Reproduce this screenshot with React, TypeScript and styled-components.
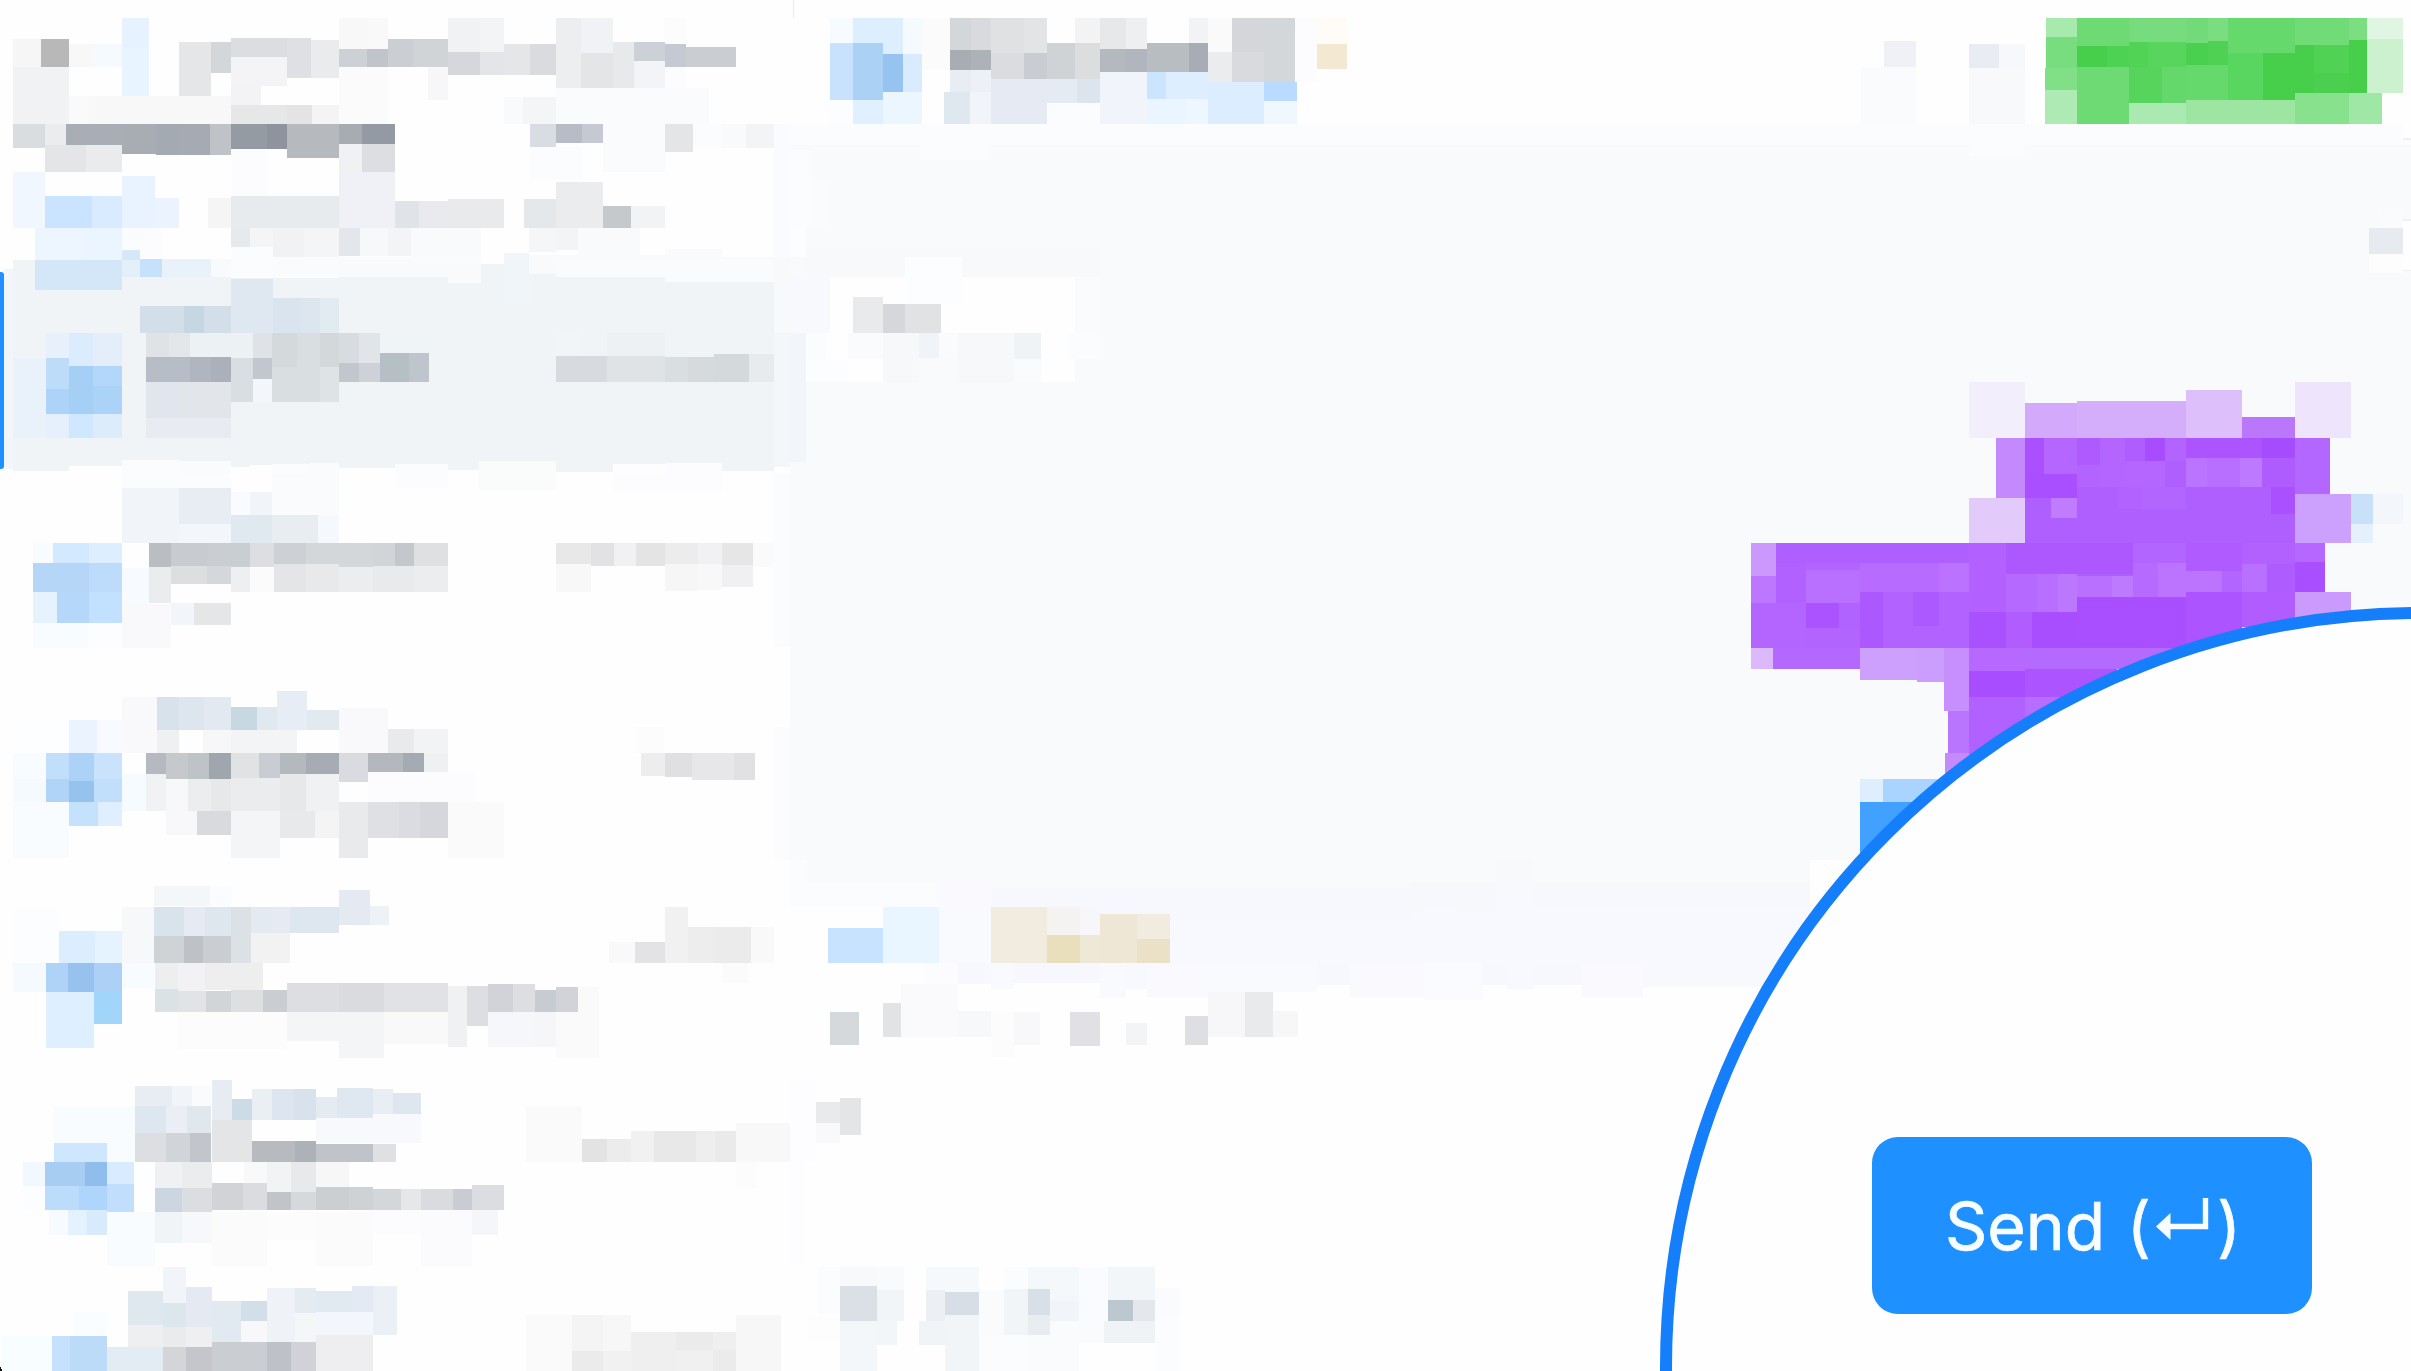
import React from 'react';
import styled, { createGlobalStyle } from 'styled-components';

type Cell = [number, number, number, number, string];

const GlobalStyle = createGlobalStyle`
  * { box-sizing: border-box; }
  html, body { margin: 0; padding: 0; background: #fefefe; }
  body { overflow: hidden; font-family: Inter, "Liberation Sans", sans-serif; }
`;

const Window = styled.main`
  position: relative;
  display: flex;
  width: 2411px;
  height: 1371px;
  overflow: hidden;
  background: #fefefe;
`;

const Sidebar = styled.aside`
  display: flex;
  flex-direction: column;
  flex: 0 0 790px;
`;

const Chat = styled.section`
  display: flex;
  flex-direction: column;
  flex: 1 1 auto;
  min-width: 0;
`;

const Row = styled.div<{ $height: number }>`
  display: flex;
  flex: 0 0 ${(p) => p.$height}px;
`;

const ActiveMark = styled.span`
  flex: 0 0 4px;
  height: 197px;
  margin-top: 12px;
  border-radius: 0 3px 3px 0;
  background: #1e90ff;
`;

const ChatHeader = styled.header`
  display: flex;
  justify-content: space-between;
  flex: 0 0 124px;
`;

const Messages = styled.div`
  display: flex;
  justify-content: space-between;
  align-items: flex-start;
  flex: 0 0 736px;
  background: linear-gradient(#fbfcfe 21px, #f9fafc 21px);
`;

const Thread = styled.div`
  display: flex;
  flex-direction: column;
`;

const Composer = styled.footer`
  display: flex;
  flex: 1 1 auto;
`;

const Art = styled.svg`
  display: block;
  flex: none;
`;

const Lens = styled.div`
  position: absolute;
  left: 1660px;
  top: 607px;
  width: 1520px;
  height: 1520px;
  padding: 517.5px 0 0 200px;
  border: 12px solid #157efb;
  border-radius: 50%;
  background: #fefefe;
`;

const SendButton = styled.button`
  display: flex;
  align-items: flex-start;
  width: 440px;
  height: 177px;
  padding: 49.5px 0 0 73px;
  border: 0;
  border-radius: 26px;
  background: #1e90ff;
  color: #f8fdff;
  font: 400 66px/80px Inter, "Liberation Sans", sans-serif;
  word-spacing: 3px;
  -webkit-text-stroke: 0.7px #f8fdff;
  white-space: pre;
`;

const ReturnIcon = styled.svg`
  flex: none;
  width: 54px;
  height: 44px;
  margin: 11.5px 7px 0 5px;
`;

interface MosaicProps {
  cells: Cell[];
  /** view box: x, y, width and height in drawing units */
  view: [number, number, number, number];
  width: number;
  height: number;
}

function Mosaic({ cells, view, width, height }: MosaicProps) {
  return (
    <Art width={width} height={height} viewBox={view.join(' ')} preserveAspectRatio="none" shapeRendering="crispEdges" aria-hidden>
      {cells.map(([x1, y1, x2, y2, fill], i) => (
        <rect key={i} x={x1} y={y1} width={x2 - x1} height={y2 - y1} fill={`#${fill}`} />
      ))}
    </Art>
  );
}

const filters: Cell[] = [
  [239,55,293,145,'e6f2ff'],[239,145,293,290,'e8f4ff'],
  [26,116,80,202,'f6f6f6'],[80,116,136,202,'b8b8b8'],[136,132,182,202,'f8f8f8'],[182,132,239,202,'f4faff'],
  [26,202,136,371,'f1f2f3'],
  [350,125,414,290,'e5e6e7'],[414,125,452,219,'d3d7da'],[452,114,563,170,'dcdde1'],[563,114,610,234,'dfe0e4'],[610,121,664,234,'eaebec'],
  [452,170,563,258,'f4f4f6'],[452,258,512,315,'f3f3f5'],
  [664,55,719,147,'f8f8f8'],[719,55,760,147,'f9f9f9'],
  [664,147,719,202,'cdd0d5'],[719,147,760,202,'c1c4ca'],[760,118,810,202,'cbced3'],[810,118,878,202,'d0d4d7'],
  [664,202,760,371,'fbfbfb'],[839,202,878,300,'f7f7fa'],
  [878,55,940,156,'f1f2f4'],[940,55,988,156,'f3f4f5'],
  [878,156,940,224,'d6d7dc'],[940,156,988,224,'e4e5e8'],[988,131,1038,224,'e5e6e8'],[1038,131,1090,224,'dadbdf'],
  [1090,55,1138,263,'edeeef'],[1138,55,1201,160,'f1f2f5'],[1138,160,1243,263,'e4e5e6'],[1201,125,1243,263,'e8e9eb'],
  [1243,125,1304,182,'ccd0d7'],[1243,182,1304,263,'f3f4f7'],[1304,132,1345,202,'c5c9d1'],[1345,141,1443,202,'cacdd2'],
  [1304,55,1345,132,'fcfcfc'],[1304,202,1345,263,'fcfcfe'],
  [136,289,174,371,'fafafa'],[174,289,452,371,'f8f8f8'],[452,315,563,371,'e6e7e7'],[563,315,612,371,'e4e4e5'],[612,315,664,371,'f4f4f4'],
  [988,290,1026,371,'f9fafc'],[1026,290,1090,371,'f4f5f7'],[1090,263,1390,371,'fafbfd'],
  [26,371,88,444,'d9dddf'],[88,371,130,435,'ebeced'],[130,371,239,435,'a9aeb6'],[239,371,305,461,'a8adb4'],[305,371,350,464,'a4aab2'],
  [350,371,411,464,'a6abb3'],[411,371,452,464,'bfc2c7'],[452,371,523,448,'949ba3'],[523,371,563,448,'8d949d'],[563,371,664,474,'b6b9be'],
  [664,371,710,433,'a7acb3'],[710,371,775,433,'949aa4'],
  [88,435,168,516,'e4e5e7'],[168,435,239,516,'e9ebec'],[664,433,710,516,'f0f1f2'],[710,433,775,516,'dddee1'],
  [1038,371,1090,440,'d9dde3'],[1090,371,1141,428,'b8bcc6'],[1141,371,1181,428,'c6c9d2'],[1181,371,1304,516,'fafbfd'],
  [1304,371,1358,456,'e4e5e6'],[1358,371,1415,444,'fbfcfd'],[1415,371,1462,444,'f9fafb'],[1462,371,1517,444,'f3f4f6'],
  [1038,440,1141,540,'fbfcfe'],[1517,371,1568,770,'fafbff'],
  [26,516,88,684,'f0f7ff'],[88,589,180,684,'cae4ff'],[180,589,239,684,'d9ebff'],[239,528,304,684,'e9f3ff'],[304,594,351,684,'ebf3ff'],
  [408,595,452,684,'f5f5f6'],[452,448,523,587,'fcfcff'],[452,587,664,684,'e8ebed'],[664,516,775,684,'f0f1f6'],[775,604,821,684,'e0e3e8'],
  [821,604,878,684,'e9eaee'],[878,597,988,684,'e9eaec'],[1028,597,1090,684,'e5e8ea'],[1090,546,1181,684,'ebecee'],
  [1181,618,1237,684,'c6c9cc'],[1237,618,1304,684,'f1f3f5'],
  [452,684,490,740,'e6eaed'],[490,684,535,740,'f3f5f6'],[535,684,596,771,'f0f2f3'],[596,684,664,771,'f3f5f7'],[664,684,706,767,'e3e6eb'],
  [706,684,760,767,'f7f8fa'],[760,684,806,767,'f2f4f6'],[806,684,942,771,'f8fafb'],[1036,684,1090,756,'f5f6f8'],
  [1090,684,1132,750,'f2f4f6'],[1132,684,1255,765,'f9fafb'],
  [69,684,169,781,'edf6ff'],[169,684,239,781,'eaf5ff'],[239,684,275,750,'fafcff'],[275,684,317,775,'fcfbfd'],
  [239,750,275,831,'d6e8f8'],[275,776,317,831,'c5e1fc'],[317,776,414,831,'ebf3fb'],
  [414,776,452,831,'f8fafc'],[452,740,535,831,'fbfcfd'],[535,771,942,831,'fafbfd'],[988,759,1036,831,'f3f6f9'],
  [1036,765,1304,822,'f9fafc'],[1304,746,1415,822,'f8fafb'],[1415,771,1568,831,'f9fafb'],
];

const activeRow: Cell[] = [
  [0,27,26,627,'f3f6f9'],[26,0,1517,637,'f0f4f7'],
  [69,0,239,90,'d3e7f8'],[239,0,275,51,'e3eff9'],[275,0,317,51,'c5e1fc'],[317,0,414,51,'e9f2fa'],[414,0,452,51,'f8fafc'],
  [452,0,535,55,'fafcfe'],[535,0,664,53,'f9fbfc'],[664,0,878,51,'f8fafc'],[878,0,942,68,'f8fafc'],[942,0,988,12,'fefefe'],
  [988,0,1036,136,'f0f5fa'],[1036,0,1090,42,'f9fafb'],[1090,0,1304,51,'f9fbfc'],[1304,0,1517,66,'f9fbfc'],
  [1517,0,1568,219,'f7f9fb'],[1517,219,1568,620,'f4f7fa'],
  [26,632,136,642,'fefefe'],[136,618,239,642,'fefefe'],[239,601,350,683,'fbfcfe'],[350,604,452,683,'fafbfd'],[452,620,490,642,'fefefe'],
  [490,616,533,642,'fefefe'],[533,612,608,766,'fbfcfe'],[608,608,664,766,'fafbfd'],[664,623,775,642,'fefefe'],[775,612,878,683,'fbfcfe'],
  [878,630,938,642,'fefefe'],[938,604,1090,690,'fafcfb'],[1201,612,1304,696,'fdfdfe'],[1304,608,1415,696,'fcfcfe'],[1415,632,1517,642,'fefefe'],
  [275,139,361,219,'d2dfe9'],[361,139,400,219,'c7d6e3'],[400,139,452,219,'d2dee8'],[452,56,535,219,'dfe8f0'],[535,113,589,219,'dae4ee'],
  [589,113,627,219,'dde5ee'],[627,113,664,219,'e3ebf2'],
  [91,219,136,293,'e8f1fb'],[136,219,182,318,'dbecff'],[182,219,239,318,'e3eefa'],[286,219,331,291,'e0e3e6'],[331,219,373,291,'e4e7ea'],
  [373,219,496,295,'ecf1f4'],[496,219,533,295,'dfe3e7'],[533,219,583,321,'d4d9dc'],[583,219,627,321,'d9dee1'],[627,219,664,321,'d3d8db'],
  [664,219,704,308,'d8dbdf'],[704,219,745,308,'e1e5e9'],[745,219,840,278,'eff4f6'],
  [26,293,91,534,'e9f1fb'],[91,293,136,387,'bcdcfa'],[91,387,136,461,'add4f8'],[136,318,182,461,'a6cff5'],[182,318,239,378,'b3d7fb'],
  [182,378,239,461,'abd2f7'],[91,461,136,534,'e5f0fc'],[136,461,182,534,'cfe7ff'],[182,461,239,534,'ddecfb'],
  [286,291,373,365,'b7bdc6'],[373,291,414,365,'b0b6bf'],[414,291,452,365,'abb1bb'],[452,295,496,425,'d9dee2'],[496,295,533,357,'c1c6cf'],
  [533,321,627,425,'d9dee1'],[627,321,664,425,'dee3e6'],[664,308,704,365,'c2c6cd'],[704,308,745,365,'ced2d8'],
  [745,278,801,365,'b6bec6'],[801,278,840,365,'bfc5cd'],
  [286,365,350,473,'e1e6ee'],[350,365,452,473,'e2e6eb'],[286,473,452,534,'e8ebf1'],[496,357,533,425,'f3f6fa'],
  [1090,219,1132,287,'f2f5f7'],[1190,219,1304,287,'edf1f4'],[1090,287,1190,365,'d7dbe0'],[1190,287,1304,365,'dfe3e6'],
  [1304,291,1348,365,'d9dee1'],[1348,291,1399,365,'d6dadd'],[1399,283,1468,365,'d4d9dc'],[1468,283,1517,365,'e7ebee'],
];

const rowTwo: Cell[] = [
  [239,-198,452,-157,'fbfcfe'],[775,-198,878,-157,'fbfcfe'],[938,-198,1090,-150,'fafcfb'],[1201,-198,1415,-144,'fcfcfe'],[1517,-198,1568,322,'fbfcfe'],
  [239,-157,350,8,'f1f5f9'],[350,-157,452,-49,'e8edf4'],[350,-49,452,8,'f3f7fb'],[452,-144,490,-75,'f9fbfe'],[490,-144,533,-75,'f1f5fa'],
  [533,-198,664,-75,'fafbfd'],[452,-75,533,8,'e0e8f0'],[533,-75,623,8,'e8edf2'],[623,-75,664,8,'f5f9fd'],
  [65,10,104,70,'f8fcff'],[104,10,175,70,'d3e9ff'],[175,10,239,70,'dceeff'],[65,70,175,156,'b5d6f7'],[112,156,175,248,'b5d7fa'],
  [175,70,239,156,'bddbfb'],[175,156,239,248,'c2e0ff'],[65,156,112,248,'e6f2fe'],[65,248,175,324,'f8fcff'],[175,248,239,324,'fcfdff'],
  [239,83,293,192,'f7fbff'],[239,192,336,325,'f9f9fb'],
  [293,10,336,82,'babdc1'],[293,82,336,190,'ebecee'],[336,10,405,78,'c8cbcf'],[405,10,452,78,'cacdd1'],[452,10,490,82,'c9ced2'],
  [490,10,537,82,'dddee1'],[537,10,599,73,'cdd1d5'],[599,10,732,80,'d3d7da'],[732,10,775,78,'d1d5d8'],[775,10,811,78,'c4c7cb'],[811,10,878,78,'dfe0e1'],
  [336,78,405,133,'dddee0'],[405,78,452,133,'d4d8db'],[452,82,490,156,'eeeff0'],[490,84,537,156,'fbfbfb'],[537,73,599,156,'e4e5e7'],
  [599,73,664,156,'e8e9eb'],[664,80,732,156,'ecedee'],[732,78,811,156,'e9eaec'],[811,78,878,156,'ecedee'],
  [336,190,380,254,'f2f5f9'],[380,190,452,254,'e5e6e7'],
  [1090,10,1159,73,'e8e8e8'],[1159,10,1203,78,'e2e2e4'],[1203,10,1246,78,'f1f1f3'],[1246,10,1304,78,'e4e4e4'],[1304,10,1368,73,'ececec'],
  [1368,10,1415,73,'f1f1f3'],[1415,10,1476,76,'e6e6e7'],[1476,10,1517,82,'fafafa'],[1090,73,1159,156,'f8f8f8'],[1304,73,1368,152,'f6f6f6'],
  [1368,73,1415,150,'f8f8f8'],[1415,76,1476,140,'f0f0f3'],
];

const rowThree: Cell[] = [
  [308,471,351,571,'d7e2ea'],[351,471,399,571,'dde6ee'],[399,471,452,571,'e2e9f0'],[452,502,504,570,'c8d8e3'],[504,502,543,570,'e0e8f0'],
  [543,453,601,570,'e7edf4'],[601,511,664,570,'e2eaf1'],[239,471,308,640,'f9f9fb'],[308,571,351,640,'eff0f1'],[397,571,452,640,'f7f7f9'],
  [452,571,582,640,'f3f4f6'],[664,504,760,640,'f9f9fc'],[760,567,811,640,'e9eaec'],[811,567,878,640,'f2f3f5'],
  [26,540,136,640,'fdfeff'],[136,540,190,640,'eaf3ff'],[190,540,239,640,'f7fbff'],
  [26,640,91,718,'f9fcff'],[26,718,91,786,'f5faff'],[26,786,136,955,'f8fcff'],
  [91,640,136,718,'c1dffb'],[136,640,185,724,'add2f7'],[185,640,239,718,'c9e3fd'],[91,718,136,786,'afd4f8'],[136,724,185,786,'96c2ee'],
  [185,718,239,786,'c1defb'],[136,786,192,857,'c5e2fd'],[192,786,239,857,'dfefff'],[239,703,286,812,'f6fbff'],
  [286,640,326,703,'b6b9bf'],[326,640,369,718,'c5c9cc'],[369,640,410,718,'bec3c8'],[410,640,452,718,'a0a6ae'],[452,640,507,714,'e0e2e4'],
  [507,640,549,714,'c9cdd3'],[549,640,600,703,'b4b9be'],[600,640,664,703,'a7acb4'],[664,640,721,726,'dadbe0'],[721,640,790,697,'b4b8be'],
  [790,640,831,697,'a5abb3'],[831,640,878,697,'eff0f2'],
  [286,703,326,812,'f1f2f4'],[326,718,369,884,'f8f8fb'],[369,718,414,812,'ecedee'],[414,718,452,812,'e7e8ea'],[452,714,549,812,'ebeced'],
  [549,703,600,812,'e7e8ea'],[600,703,664,812,'f0f1f3'],[721,697,931,786,'fcfcff'],
  [369,812,387,884,'f8f8fb'],[387,812,452,884,'d9dade'],[452,812,549,955,'f4f5f7'],[549,812,617,893,'e8e9eb'],[617,812,664,893,'f4f4f5'],
  [664,786,721,955,'e9eaec'],[721,786,782,895,'dfe0e4'],[782,786,823,895,'dbdce1'],[823,786,878,895,'d6d7dc'],[878,786,988,955,'fafafa'],
  [1245,560,1304,640,'fcfcfc'],[1256,640,1304,708,'ededee'],[1304,640,1356,710,'e0e0e3'],[1356,640,1439,721,'e7e7e9'],[1439,640,1480,721,'e1e1e4'],
  [1517,562,1568,960,'fcfcff'],
];

const rowFour: Cell[] = [
  [302,78,411,139,'f4f7fa'],[411,78,452,139,'fafcff'],[239,141,302,309,'f7f8fa'],[302,141,361,228,'d9e3eb'],[361,141,401,228,'e6ebf3'],
  [401,141,452,228,'dee7ee'],[452,141,491,309,'dce1e5'],[491,141,533,218,'e3eaf1'],[533,141,568,218,'e6ebf3'],[568,141,664,218,'dee7ef'],
  [664,91,725,196,'e5eaf2'],[725,137,763,196,'ecf2f5'],
  [302,228,361,309,'d0d3d6'],[361,228,398,309,'bec1c6'],[398,228,452,309,'cacdd1'],[491,218,568,309,'f2f2f3'],
  [26,141,115,309,'fcfdff'],[115,212,187,309,'dcedff'],[187,212,239,309,'e5f2ff'],[26,309,91,395,'f5faff'],[91,309,133,396,'afd3f6'],
  [133,309,184,396,'97c2ee'],[184,309,239,396,'acd0f6'],[91,396,184,564,'deefff'],[184,396,239,492,'a1d5fa'],[239,309,302,388,'f8fbff'],
  [303,309,349,388,'edeeef'],[349,309,401,392,'f2f2f4'],[401,309,516,390,'eeeeef'],
  [303,388,349,456,'dae2e6'],[349,392,403,456,'e2e3e6'],[403,392,452,456,'d2d5d8'],[452,390,516,456,'dddfe1'],[516,390,563,456,'cacdd2'],
  [563,369,664,456,'dddee1'],[664,368,753,456,'dadbde'],[753,370,878,456,'e1e2e5'],[878,377,916,560,'f0f1f3'],[916,379,957,498,'dddee2'],
  [957,372,1005,456,'d2d3d8'],[1005,372,1048,456,'dddee1'],[1048,391,1090,456,'c7cbd2'],[1090,381,1132,456,'d2d3d9'],[1132,381,1174,595,'fafafa'],
  [349,456,563,568,'fcfcfc'],[563,456,664,543,'f4f5f7'],[664,456,753,595,'f3f5f7'],[753,456,878,552,'f9f9fa'],[957,456,1048,560,'f6f7fa'],
  [1048,456,1090,560,'f6f6f8'],[1090,456,1132,595,'fafafb'],
  [1193,245,1245,309,'f9f9f9'],[1245,245,1304,309,'e3e3e5'],[1304,141,1349,309,'f1f1f1'],[1349,202,1401,309,'ededee'],
  [1401,202,1471,309,'ebebec'],[1471,202,1517,309,'f9f9f9'],[1415,309,1467,370,'fbfbfb'],
];

const rowFive: Cell[] = [
  [265,78,337,139,'e8edf4'],[337,78,376,139,'f1f4f8'],[376,78,414,139,'f9fbfc'],[415,60,455,181,'e7ecf3'],[455,118,494,181,'cddbe7'],
  [494,87,533,181,'eaeff4'],[533,87,577,181,'dde6f0'],[577,87,620,181,'d8e2ed'],[620,112,660,174,'e5ebf3'],[660,85,731,174,'dfe8f0'],
  [731,88,770,163,'e8eef4'],[770,98,825,163,'dee7ef'],
  [265,139,325,218,'dee6ef'],[325,139,367,218,'e9eff4'],[367,139,414,218,'e0e7ed'],
  [105,139,265,249,'f8fcff'],[209,249,265,307,'f8fcff'],[620,174,731,250,'f8f9fc'],[731,163,825,250,'f8f9fc'],
  [265,218,325,307,'dddee2'],[325,218,372,307,'d1d4d8'],[372,218,414,307,'c2c5cc'],[415,181,494,307,'e4e5e6'],[494,243,579,307,'b7bbc0'],
  [579,243,620,307,'acb2b7'],[620,252,731,307,'c0c3ca'],[731,252,776,307,'dfe0e2'],
  [105,249,209,307,'cfe6ff'],[45,307,89,379,'f1f8ff'],[89,307,166,379,'a7cdf2'],[166,307,209,379,'8fbeed'],[209,307,263,371,'d9ebff'],
  [89,379,155,451,'bcdcfb'],[155,379,209,451,'afd5fc'],[209,371,263,456,'c1dffc'],[45,379,89,451,'fbfdff'],[96,451,134,524,'f7fbff'],
  [134,451,171,524,'e4f1ff'],[171,451,209,524,'d8ebfd'],[209,456,304,618,'f8fcff'],
  [304,307,356,383,'f0f1f3'],[356,307,415,383,'ebeced'],[479,307,524,368,'f9f9fa'],[524,307,571,395,'f2f3f5'],[571,307,620,395,'e8e9ea'],
  [620,307,685,380,'f7f7f8'],
  [304,383,356,456,'ccd6e0'],[356,383,415,456,'dcdde0'],[415,369,477,451,'d2d3d7'],[477,369,524,451,'dbdce0'],[524,395,571,451,'c1c4c9'],
  [571,395,620,451,'d5d9dc'],[620,380,685,451,'cbcfd1'],[685,380,731,451,'ced2d4'],[731,387,786,451,'d3d7d9'],[786,387,825,451,'e6e7e9'],
  [825,387,887,451,'dadbdf'],[887,387,926,451,'c9ccd3'],[926,375,987,451,'dcdde1'],
  [304,456,356,548,'f0f4f7'],[356,456,415,548,'f7f8fb'],[415,456,524,618,'fbfbfb'],[524,456,620,540,'fcfcfc'],[620,456,731,618,'fbfbfb'],
  [731,451,826,524,'fcfcff'],[826,451,926,618,'fbfbfe'],[926,451,977,524,'f5f6f9'],
  [1031,139,1141,307,'fafafa'],[1141,237,1189,307,'e3e3e3'],[1189,237,1237,307,'ececec'],[1237,212,1282,307,'f1f1f1'],
  [1282,212,1364,307,'e8e8e8'],[1364,212,1401,307,'eeeeee'],[1401,212,1442,307,'eaeaea'],[1442,188,1552,307,'f8f8f8'],[1442,307,1484,383,'fcfcfc'],
];

const rowSix: Cell[] = [
  [319,620,365,730,'f1f4f8'],[251,693,319,796,'dfe7ef'],[319,730,365,802,'dce6ed'],[365,681,415,802,'e5eaf2'],[415,724,473,845,'e2eaf1'],
  [473,724,524,783,'d2dfe8'],[473,783,524,845,'f8f8fb'],[524,684,578,845,'eff3f7'],[578,684,620,760,'e4ebf1'],[578,760,620,845,'f5f6f8'],
  [620,693,690,757,'e1e9f1'],[690,679,731,757,'e4eaf3'],[731,679,779,824,'ebf0f6'],[620,757,731,826,'f3f6fb'],
  [146,757,209,828,'f9fdff'],[251,796,319,861,'eeeff1'],[319,802,365,861,'eaebed'],[365,802,415,861,'efeff1'],
  [4,828,101,933,'f8fdff'],[101,828,137,933,'c5e1fd'],[137,828,209,933,'bbdbf9'],[209,861,319,933,'e3ebf3'],[319,861,365,933,'d3d5d9'],
  [365,861,415,933,'c4c6cc'],[415,845,524,933,'cacdd1'],[524,845,571,933,'bec1c7'],[571,845,620,933,'d1d2d7'],[620,826,731,933,'eeeef0'],
  [1031,765,1121,933,'fafafa'],[1121,765,1182,873,'f4f4f4'],[1182,765,1237,873,'f7f7f7'],[1237,816,1324,933,'efefef'],
  [1324,816,1398,871,'ebebeb'],[1398,816,1442,871,'efefef'],[1324,871,1398,933,'f0f0f0'],[1398,871,1442,933,'ebebeb'],
  [1442,765,1531,933,'f7f7f7'],[1121,873,1182,933,'ebebeb'],[1182,873,1237,933,'f1f1f1'],
  [0,921,2,933,'151515'],[2,927,4,933,'151515'],
];

const contact: Cell[] = [
  [8,0,11,55,'e9e9f2'],
  [101,55,159,130,'f5fbff'],[159,55,286,163,'ddeeff'],[286,55,335,163,'f5faff'],[335,55,404,210,'fbfbfc'],[101,130,159,299,'c8e2fd'],
  [159,130,234,299,'abd1f5'],[234,163,286,275,'96c3ef'],[286,163,335,275,'d8ebff'],[159,299,234,371,'e0f0ff'],[234,275,335,371,'ecf6ff'],
  [101,299,159,371,'fcfdff'],
  [404,55,459,150,'d4d7da'],[459,55,508,150,'d8dadd'],[508,55,592,159,'e0e1e3'],[592,55,650,159,'e3e4e5'],[721,55,783,128,'f3f3f3'],
  [783,55,850,147,'e7e8e9'],[850,55,902,147,'eeeff0'],[1009,55,1057,128,'f2f3f4'],[1057,55,1119,155,'fafafa'],[1119,55,1199,155,'d5d6da'],
  [1119,155,1199,246,'d9dadd'],[1199,55,1277,246,'d3d7da'],[1277,55,1333,246,'fcfcfe'],[1333,55,1408,131,'fffcf7'],[1333,131,1408,207,'f3e8d1'],
  [404,150,459,209,'a8adb4'],[459,150,508,209,'adb1b8'],[508,159,592,237,'dbdce0'],[592,159,650,237,'c9ccd0'],[650,128,721,237,'cfd3d6'],
  [721,128,783,237,'dcdddf'],[783,147,850,215,'b4b9bf'],[850,147,902,215,'b1b5be'],[902,128,1009,215,'b8bdc2'],[1009,128,1057,215,'a8adb5'],
  [1057,155,1119,246,'ebecee'],
  [404,209,457,275,'e8edf5'],[457,209,508,275,'edf1f7'],[389,275,455,371,'dfe7ef'],[455,275,508,371,'f1f4f8'],[508,237,650,371,'e6ebf3'],
  [650,237,726,308,'e4ebf2'],[726,237,783,308,'dce4ee'],[650,308,783,371,'fbfcfe'],[783,215,902,371,'f1f5fb'],[902,215,950,297,'cbe5ff'],
  [950,215,1057,297,'dceeff'],[902,297,1002,371,'ebf5ff'],[1002,297,1057,371,'eef7ff'],[1057,246,1199,371,'dcedff'],
  [1199,246,1282,304,'b8dbff'],[1199,304,1282,371,'f0f7ff'],
];

const actions: Cell[] = [
  [319,202,445,371,'fafbfd'],[372,123,445,202,'f0f1f6'],[565,131,633,205,'e9edf3'],[633,131,691,205,'f7f8fc'],[565,205,691,371,'f8f9fb'],
  [740,55,810,112,'a8e9ad'],[810,55,929,139,'6dda73'],[929,55,1057,125,'77dc7d'],[1057,55,1108,129,'72da78'],[1108,55,1152,122,'7add80'],
  [1152,55,1304,159,'66d96c'],[1304,55,1427,134,'70db77'],[1427,55,1469,121,'7bde81'],[1469,55,1550,118,'e0f5e2'],
  [740,112,810,205,'78dd7e'],[737,205,810,269,'80df87'],[737,269,810,371,'aeeab3'],[810,139,878,202,'47ce4b'],[878,139,929,202,'4ed253'],
  [929,125,972,202,'51d356'],[972,125,1057,202,'57d55d'],[1057,129,1108,194,'4ad04f'],[1108,122,1152,194,'4fd254'],
  [810,202,929,371,'6dda74'],[929,202,1002,308,'56d45c'],[1002,202,1057,308,'65d86b'],[1057,194,1152,301,'66d96d'],
  [1152,159,1232,301,'59d660'],[1232,159,1304,301,'47cf4b'],[1304,134,1348,278,'47cf4b'],[1348,134,1427,220,'50d255'],
  [1348,220,1427,278,'4acf4f'],[1427,121,1469,278,'47cf4b'],[1469,118,1550,278,'ccf1cf'],[929,308,1057,371,'aae9af'],
  [1057,301,1304,371,'9ce6a2'],[1304,278,1427,371,'87e18d'],[1427,278,1502,371,'9ee7a4'],
];

const incoming: Cell[] = [
  [330,433,508,480,'fbfcfe'],[0,450,53,685,'fbfcfd'],[53,545,101,685,'fafbfd'],[0,685,40,772,'fcfdfe'],
  [0,830,101,1000,'f7f9fc'],[0,1000,40,1386,'f2f6fa'],[40,742,783,830,'f8f9fb'],
  [101,831,722,1000,'fefefe'],[722,831,783,1000,'fafbfd'],[290,772,434,912,'fcfdfe'],
  [160,891,234,1000,'e9eaec'],[234,912,290,1000,'d6d7db'],[290,912,383,1000,'e0e2e4'],
  [40,1000,90,1077,'fafcfd'],[90,1000,147,1077,'fefefe'],[147,1000,234,1077,'f9fbfc'],[40,1077,147,1145,'fbfdfe'],[147,1077,234,1145,'fefefe'],
  [234,1000,326,1145,'f6f8fa'],[326,1000,376,1074,'f0f4f8'],[376,1000,426,1074,'fafbfd'],[426,1000,566,1145,'f6f8fa'],
  [326,1074,426,1145,'f9fafc'],[566,1000,636,1077,'eff3f6'],[566,1077,636,1145,'fafbfd'],[636,1000,722,1145,'fefefe'],[702,1000,783,1077,'fbfcfe'],
];

const threadTop: Cell[] = [
  [565,372,691,467,'fbfcfd'],[1550,372,1568,413,'fefefe'],[1550,413,1568,419,'eef0f6'],[1550,658,1568,664,'eef0f4'],
  [1550,664,1568,810,'fefefe'],[1492,628,1550,685,'fafbfd'],[1473,685,1550,763,'e7ebef'],[1473,763,1550,820,'fdfdfe'],[1550,810,1568,814,'eef0f6'],
];

const outgoing: Cell[] = [
  [565,66,692,234,'f3eefc'],[692,129,811,234,'d3a9fb'],[811,122,1057,234,'d5aefb'],[1057,89,1185,234,'dcbffb'],[1185,170,1304,234,'bb77fb'],
  [1304,66,1432,234,'eee4fb'],[692,234,1304,780,'b05fff'],
  [626,234,692,414,'c389fd'],[565,414,692,549,'e2cafb'],[692,234,736,341,'ab50ff'],[736,234,811,341,'b466ff'],[692,341,811,414,'a94fff'],
  [751,414,811,473,'c07bff'],[811,234,862,315,'af5aff'],[862,234,918,381,'b565ff'],[918,234,964,302,'b05dff'],[964,234,1010,302,'a74dff'],
  [1010,234,1057,302,'b364ff'],[1057,234,1230,293,'ac54ff'],[1230,234,1304,293,'a64cff'],[1057,293,1105,381,'bb74ff'],
  [1105,293,1180,381,'b86fff'],[1180,293,1230,381,'bd79ff'],[1230,293,1304,381,'af5cff'],[811,315,862,381,'b364ff'],
  [918,302,1010,381,'b466ff'],[1250,381,1304,463,'aa50ff'],[904,381,957,446,'b162ff'],[957,381,1057,446,'b366ff'],
  [1304,234,1385,402,'b467ff'],[1304,402,1432,549,'cba1fd'],[1432,402,1482,492,'c8e1f9'],[1482,402,1550,492,'f3f7fc'],[1432,492,1482,549,'e4f1fd'],
  [127,549,565,865,'b364ff'],[70,549,127,648,'cb99fd'],[70,648,127,728,'bc77fe'],[127,549,565,610,'af5eff'],[127,610,196,728,'b061ff'],
  [196,631,318,728,'b96fff'],[318,610,565,696,'b86cff'],[497,610,565,696,'bb72ff'],[70,728,196,865,'b565ff'],[196,728,269,805,'aa53ff'],
  [269,728,318,805,'b163ff'],[318,696,369,865,'ac57ff'],[369,696,565,865,'b262ff'],[438,696,496,797,'ac59ff'],
  [70,865,120,927,'dbb9fb'],[120,865,318,927,'b568ff'],[318,865,446,960,'cda0fd'],[446,865,508,965,'cb9dfd'],
  [508,865,565,1054,'c68ffd'],[517,1054,565,1180,'ba75fe'],[511,1180,565,1245,'c68bfb'],
  [565,549,650,755,'b260ff'],[650,549,938,643,'ad58ff'],[938,549,1057,608,'b366ff'],[1057,549,1185,632,'af5bff'],[1185,549,1304,612,'b261ff'],
  [1304,549,1373,606,'b667ff'],[1304,606,1373,696,'aa4fff'],[1304,696,1432,780,'cb9afd'],[650,643,719,755,'b669ff'],[719,643,768,755,'b86fff'],
  [768,643,811,755,'bc77ff'],[811,647,889,711,'b970ff'],[889,647,938,711,'be7aff'],[938,608,994,711,'b76aff'],[994,608,1057,711,'bc74ff'],
  [1057,632,1138,696,'bc74ff'],[1138,632,1185,696,'b365ff'],[1185,612,1241,696,'b96fff'],[1241,612,1304,696,'af5cff'],
  [565,755,650,865,'a950ff'],[650,755,708,865,'b05cff'],[708,755,811,865,'a84eff'],[811,711,1057,865,'a94fff'],[1057,696,1185,865,'ac54ff'],
  [1185,696,1304,800,'b05cff'],[565,865,692,934,'b769ff'],[692,865,1057,927,'b56aff'],[565,934,692,1010,'a84dff'],[692,927,900,1010,'ab54ff'],
  [565,1010,692,1200,'b061ff'],[692,1010,780,1080,'b76dff'],
  [318,1258,369,1326,'deeeff'],[369,1258,520,1326,'a8d4ff'],[318,1326,460,1480,'42a1ff'],
];

const composerLeft: Cell[] = [
  [0,0,42,141,'fbfcfe'],[42,0,1568,85,'f9fafc'],[42,70,376,141,'fbfcfe'],[376,52,508,141,'f9f9fe'],[508,85,1568,180,'f7f8fd'],
  [508,180,1568,309,'f8f9fe'],[376,141,508,309,'f9fafe'],
  [97,204,234,309,'c8e3ff'],[234,141,376,309,'e9f5ff'],[508,141,650,309,'f2ebdf'],[650,141,733,224,'f5f3f1'],[733,141,783,224,'f7f6fa'],
  [650,224,733,309,'eadfbd'],[733,224,783,309,'efe8d6'],[783,163,877,309,'eee7d5'],[877,163,961,236,'f1ebe0'],[877,236,961,309,'ebe1c7'],
  [342,309,424,373,'fcfcff'],[424,309,508,373,'f7f8fe'],[508,309,566,387,'f9fafe'],[566,309,783,370,'f7f8fe'],[783,309,850,413,'f9fafe'],
  [850,309,903,387,'f8f9fe'],[903,309,1057,410,'faf9fe'],[1057,309,1332,396,'f9fafe'],[1332,309,1415,374,'f6f8fe'],[1415,309,1568,411,'faf9fe'],
  [101,456,175,555,'d5d9dc'],[234,430,281,531,'e1e3e5'],[281,373,424,531,'fafafc'],[424,453,508,531,'f7f8fa'],[566,456,632,555,'f8f8fa'],
  [508,456,566,592,'fcfcfd'],[708,456,783,558,'e0e0e5'],[850,489,903,555,'f3f4f6'],[999,468,1057,555,'dedfe2'],[1057,396,1151,531,'f7f7f9'],
  [1151,396,1222,531,'e9eaeb'],[1222,453,1284,531,'f7f7f8'],
  [0,660,66,905,'fdfdff'],[0,905,40,1215,'fdfdff'],[66,725,126,788,'e8eaeb'],[126,715,179,826,'e3e5e6'],[66,788,126,848,'f9f9fc'],
  [126,1220,220,1278,'f7f9fb'],[70,1220,126,1362,'fbfcfd'],[220,1220,288,1289,'f9fafc'],[344,1220,477,1289,'f6f9fb'],[541,1220,601,1287,'fafcfd'],
  [601,1220,731,1322,'f4f8fb'],[731,1220,805,1450,'fafbfe'],[805,1220,923,1320,'f3f6f9'],[126,1278,220,1382,'dae0e6'],
  [220,1289,288,1382,'f1f5f8'],[344,1289,393,1382,'eceff4'],[393,1289,477,1296,'f6f9fb'],[393,1296,477,1364,'d8dee6'],[477,1289,541,1424,'fafbfc'],
  [541,1287,601,1424,'f2f5f8'],[601,1287,658,1364,'d9dfe7'],[601,1364,658,1424,'e9edf1'],[658,1322,731,1382,'f1f5f9'],
  [658,1382,793,1449,'f9fbfc'],[805,1320,868,1382,'bdc7cf'],[868,1320,923,1382,'e4e8ed'],[923,1284,986,1362,'f9fbfc'],
  [126,1382,220,1533,'f4f7fa'],[220,1382,271,1456,'f3f6f9'],[327,1382,393,1456,'f1f4f7'],[393,1364,477,1533,'f1f5f8'],
  [477,1424,601,1533,'fbfcfe'],[601,1424,731,1533,'f9fbfd'],[793,1382,923,1449,'f0f3f6'],[42,1364,126,1445,'fcfdfc'],[923,1362,986,1533,'fafcfe'],
];

const composerRight: Cell[] = [
  [330,0,1530,68,'f9fafc'],[330,68,1530,156,'f6f8fc'],[330,156,1530,310,'f8f9fe'],[588,0,702,96,'f7f9fb'],[588,96,702,168,'f8f9fe'],
  [378,137,468,156,'f8f9fe'],[702,137,1530,156,'f8f9fe'],[330,310,372,411,'f9f9fe'],[372,310,545,419,'fafbfe'],[545,310,621,374,'f6f8fe'],
  [621,310,702,386,'f8f9fe'],[702,310,845,374,'f6f8fe'],[845,310,1030,410,'faf9fe'],[1030,310,1530,382,'f7f9fd'],
];

const conversations: { cells: Cell[]; top: number; height: number }[] = [
  { cells: rowTwo, top: -198, height: 186 },
  { cells: rowThree, top: 360, height: 200 },
  { cells: rowFour, top: 0, height: 200 },
  { cells: rowFive, top: 0, height: 206 },
  { cells: rowSix, top: 618, height: 105 },
];

export default function App() {
  return (
    <>
      <GlobalStyle />
      <Window>
        <Sidebar>
          <Row $height={260}>
            <Mosaic cells={filters} view={[0, 0, 1548.4, 780]} width={790} height={260} />
          </Row>
          <Row $height={214}>
            <ActiveMark />
            <Mosaic cells={activeRow} view={[7.84, 0, 1540.56, 642]} width={786} height={214} />
          </Row>
          {conversations.map(({ cells, top, height }, i) => (
            <Row key={i} $height={height}>
              <Mosaic cells={cells} view={[0, top, 1548.4, height * 3]} width={790} height={height} />
            </Row>
          ))}
        </Sidebar>
        <Chat>
          <ChatHeader>
            <Mosaic cells={contact} view={[0, 0, 1568, 372]} width={620} height={124} />
            <Mosaic cells={actions} view={[0, 0, 1568, 372]} width={691} height={124} />
          </ChatHeader>
          <Messages>
            <Mosaic cells={incoming} view={[0, 372, 1568, 1014]} width={620} height={338} />
            <Thread>
              <Mosaic cells={threadTop} view={[0, 372, 1568, 708]} width={691} height={236} />
              <Mosaic cells={outgoing} view={[0, 0, 1568, 1500]} width={691} height={500} />
            </Thread>
          </Messages>
          <Composer>
            <Mosaic cells={composerLeft} view={[0, 0, 1568, 1533]} width={620} height={511} />
            <Mosaic cells={composerRight} view={[330, 0, 1200, 1533]} width={400} height={511} />
          </Composer>
        </Chat>
        <Lens>
          <SendButton type="button">
            <span>Send (</span>
            <ReturnIcon viewBox="0 0 54 44" aria-label="Return">
              <path d="M14.5 15v27L0 28.5z" fill="currentColor" stroke="none" />
              <path d="M12 28.5H49.5V0" fill="none" stroke="currentColor" strokeWidth="5.4" />
            </ReturnIcon>
            <span>)</span>
          </SendButton>
        </Lens>
      </Window>
    </>
  );
}
